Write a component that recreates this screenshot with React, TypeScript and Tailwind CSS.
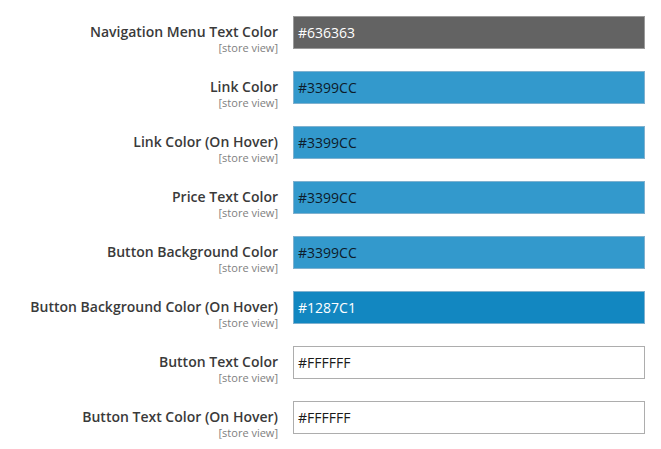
import React from "react";

type Row = { label: string; value: string; bg: string; fg: string; border: string };

const rows: Row[] = [
  { label: "Navigation Menu Text Color", value: "#636363", bg: "bg-[#636363]", fg: "text-white", border: "border-[#9a9a9a]" },
  { label: "Link Color", value: "#3399CC", bg: "bg-[#3399cc]", fg: "text-[#0d1b2a]", border: "border-[#7fb1cf]" },
  { label: "Link Color (On Hover)", value: "#3399CC", bg: "bg-[#3399cc]", fg: "text-[#0d1b2a]", border: "border-[#7fb1cf]" },
  { label: "Price Text Color", value: "#3399CC", bg: "bg-[#3399cc]", fg: "text-[#0d1b2a]", border: "border-[#7fb1cf]" },
  { label: "Button Background Color", value: "#3399CC", bg: "bg-[#3399cc]", fg: "text-[#0d1b2a]", border: "border-[#7fb1cf]" },
  { label: "Button Background Color (On Hover)", value: "#1287C1", bg: "bg-[#1287c1]", fg: "text-white", border: "border-[#7fb1cf]" },
  { label: "Button Text Color", value: "#FFFFFF", bg: "bg-white", fg: "text-[#1a1a1a]", border: "border-[#adadad]" },
  { label: "Button Text Color (On Hover)", value: "#FFFFFF", bg: "bg-white", fg: "text-[#1a1a1a]", border: "border-[#adadad]" },
];

export default function App() {
  return (
    <div
      className="w-[661px] h-[449px] bg-white pt-[16px] flex flex-col gap-[22px]"
      style={{ fontFamily: '"Open Sans", "Liberation Sans", sans-serif' }}
    >
      {rows.map((r, i) => (
        <div key={i} className="flex items-start h-[33px]">
          <div className="w-[278px] flex flex-col items-end pt-[7px]">
            <div className="text-[14px] leading-[18px] font-semibold text-[#3a3a3a]">{r.label}</div>
            <div className="text-[11px] leading-[13px] text-[#808080]">[store view]</div>
          </div>
          <div
            className={`ml-[15px] w-[352px] h-[33px] border ${r.border} ${r.bg} ${r.fg} text-[14px] flex items-center pl-[4px]`}
          >
            {r.value}
          </div>
        </div>
      ))}
    </div>
  );
}
